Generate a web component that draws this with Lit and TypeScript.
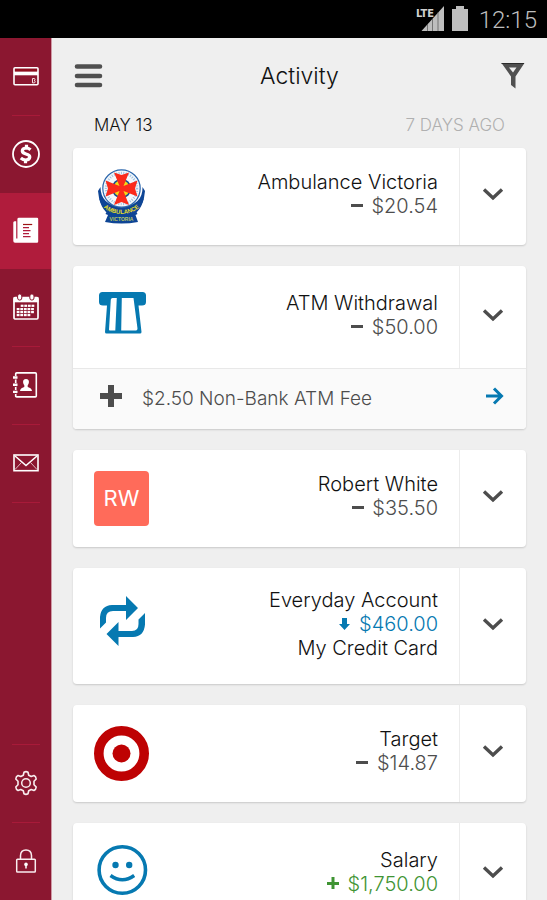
import { LitElement, html, svg, css, nothing, TemplateResult } from "lit";
import { customElement, property } from "lit/decorators.js";

type Tone = "out" | "move" | "in";

interface Transaction {
  logo: TemplateResult;
  title: string;
  amount: string;
  tone: Tone;
  target?: string;
  fee?: string;
  size: "regular" | "roomy" | "tall";
}

/* ---------- navigation icons, 28 x 28 ---------- */

const cardIcon = svg`
  <rect x="2" y="5.700" width="24" height="17" rx="1" fill="none" stroke="#fff" stroke-width="1.600"/>
  <path d="M2 9.500H26V13.300H2Z" fill="#fff"/>
  <path d="M3 7H25V9.300H3Z" fill="#8f0d1c"/>
  <path d="M20.500 16.500h1.500q1 0 1 1t-1 1q1.200 0 1.200 1.200t-1.200 1.200h-1.500Z" fill="none" stroke="#f3dde1" stroke-width="1"/>`;

const dollarIcon = svg`
  <circle cx="14" cy="14" r="13" fill="none" stroke="#fff" stroke-width="1.800"/>
  <path d="M18.500 9.800Q16.500 8 14 8Q10.300 8.200 10.300 11Q10.500 13 14 14Q17.800 15 17.800 17Q17.500 19.800 14 20Q11 20 8.800 18" fill="none" stroke="#fff" stroke-width="3.200"/>
  <path d="M14.500 4.800V9M13.500 19V23.300" stroke="#fff" stroke-width="3.200"/>`;

const newsIcon = svg`
  <path d="M7 1.700H25Q26.200 1.700 26.200 3V25.500Q26.200 26.700 25 26.700H3Q1.300 26.500 1.300 25V6.500Q1.300 5.500 2.500 5.300H4.200V22.500H5.400V3Q5.500 1.700 7 1.700Z" fill="#fff"/>
  <path d="M11 12H17M11 15H18.500M11 18H17M11 21H18.500" transform="translate(0 -0.300)" stroke="#b01c3c" stroke-width="1.300"/>
  <path d="M11 8.500H20.200" stroke="#9c1515" stroke-width="1.200"/>`;

const dotRows = [
  [8.7, 12.7, 4], [4.7, 16, 5], [4.7, 19, 5], [4.7, 22, 4],
];
const calendarIcon = svg`
  <path d="M3 4.500H25Q26 4.500 26 6V24.500Q26 26 25 26H3Q2 26 2 24.500V6Q2 4.500 3 4.500Z" fill="none" stroke="#fff" stroke-width="1.700"/>
  <path d="M1.500 4.500H26.500V9.300H1.500Z" fill="#fff"/>
  <rect x="5.600" y="0.900" width="4.200" height="6.200" rx="2.100" fill="#fff" stroke="#8b1730" stroke-width="1"/>
  <rect x="17.800" y="0.900" width="4.200" height="6.200" rx="2.100" fill="#fff" stroke="#8b1730" stroke-width="1"/>
  ${dotRows.map(([x, y, n]) => Array.from({ length: n }, (_, i) =>
    svg`<rect x=${x + i * 3.6} y=${y - 1} width="2.800" height="2.200" fill="#fff"/>`))}`;

const contactsIcon = svg`
  <rect x="3.700" y="1.900" width="20.600" height="24" rx="1" fill="none" stroke="#fff" stroke-width="1.600"/>
  <path d="M3.700 3V25" stroke="#8b1730" stroke-width="2"/>
  <path d="M3.700 8.500V12M3.700 16V19M3.700 23V26M3.700 2V5" stroke="#fff" stroke-width="1.500"/>
  <path d="M1 6.500H5.500M1 13.700H5.500M1 20.900H5.500" stroke="#fff" stroke-width="2.400"/>
  <path d="M14 8Q17.300 8 16.900 11.500Q16.700 13.300 15.700 14.300V16Q19.800 17 20 20H8Q8.200 17 12.300 16V14.300Q11.300 13.300 11.100 11.500Q10.700 8 14 8Z" fill="#fff"/>`;

const mailIcon = svg`
  <rect x="2" y="6" width="24" height="15.700" fill="none" stroke="#fff" stroke-width="1.600"/>
  <path d="M3 7L14 16.500L25 7" fill="none" stroke="#fff" stroke-width="1.600"/>
  <path d="M3 20.500L9.500 13.500M25 20.500L18.500 13.500" stroke="#e8c9cf" stroke-width="0.900"/>`;

const gearIcon = svg`
  <path d="M12 3.200Q14 2 16 3.200L16.700 6.200L19.200 7.500L22 6.500Q24 7.300 24.200 10L22 12.300V15.700L24.200 18Q24 20.700 22 21.500L19.200 20.500L16.700 21.800L16 24.800Q14 26 12 24.800L11.300 21.800L8.800 20.500L6 21.500Q4 20.700 3.800 18L6 15.700V12.300L3.800 10Q4 7.300 6 6.500L8.800 7.500L11.300 6.200Z" fill="none" stroke="#f9edef" stroke-width="1.600" stroke-linejoin="round"/>
  <circle cx="14" cy="14" r="4.300" fill="none" stroke="#f9edef" stroke-width="1.500"/>`;

const lockIcon = svg`
  <rect x="4.700" y="12.200" width="18.600" height="12.800" rx="0.800" fill="none" stroke="#f9edef" stroke-width="1.500"/>
  <path d="M8.500 12V8.500Q8.700 3 14 3Q19.300 3 19.500 8.500V12" fill="none" stroke="#f9edef" stroke-width="1.500"/>
  <circle cx="14" cy="17.400" r="1.800" fill="#fff"/><path d="M14 17V21.500" stroke="#fff" stroke-width="1.500"/>`;

/* ---------- merchant logos, 55 x 55 ---------- */

const ambulanceLogo = html`<svg viewBox="0 0 55 55" role="img" aria-label="Ambulance Victoria logo">
  <path d="M6.500 18L4 22Q5 36 13 42L11.500 45L14 46L11 53Q27.500 56 44 53L41.500 46L43.500 45L42 42Q50 36 51 22L48.500 18Q49 36 27.500 38Q6.500 36 6.500 18Z" fill="#0e4595"/>
  <circle cx="27.500" cy="19.500" r="18.700" fill="#f4f8fc" stroke="#2b66ac" stroke-width="1.200"/>
  <circle cx="27.500" cy="19.500" r="15.500" fill="none" stroke="#9fc0df" stroke-width="2.500" stroke-dasharray="1 1.400"/>
  <circle cx="27.500" cy="19.500" r="9" fill="#f5d915" stroke="#1d4f92" stroke-width="1.600"/>
  <path d="M20 3.500L27.500 6L35 3.500L29.500 17L43.500 11.500L41 19.500L43.500 27.500L29.500 22L35 36L27.500 33L20 36L25.500 22L11.500 27.500L14 19.500L11.500 11.500L25.500 17Z" fill="#fb2a1c"/>
  <path d="M9 33Q14 40 27.500 40Q41 40 46 33L50 29Q48 38 43 43Q27.500 51 12 43Q7 38 5 29Z" fill="#0e4595"/>
  <path id="banner" d="M8 37Q16 45 27.500 45Q39 45 47 37" fill="none"/>
  <text font-family="Liberation Sans, sans-serif" font-weight="bold" font-size="6" fill="#e9df26"><textPath href="#banner" startOffset="50%" text-anchor="middle">AMBULANCE</textPath></text>
  <text x="27.500" y="52" text-anchor="middle" font-family="Liberation Sans, sans-serif" font-weight="bold" font-size="5" fill="#b9c664">VICTORIA</text>
</svg>`;

const atmLogo = html`<svg viewBox="94 289 55 55" aria-hidden="true">
  <path d="M102.500 291H142.500Q146 291 146 294.500V301Q146 304.500 142 304.500H138.500L141.500 331Q141.500 332.500 140 332.500H106.500Q105 332.500 105 331L107 304.500H103Q99 304.500 99 301V294.500Q99 291 102.500 291Z" fill="#0679b1"/>
  <path d="M112.500 297H116.800L115.300 329.500H109.800Q109 329.500 109 328.500L110.800 298.500Q111 297 112.500 297ZM121.800 297H133.500L137.500 327.500Q137.500 329.500 136 329.500H121.200Z" fill="#fff"/>
</svg>`;

const swapLogo = html`<svg viewBox="94 599 55 55" aria-hidden="true">
  <g fill="#0679b1">
    <path d="M100 628.500V617Q101 605.500 112 605H126V596L138 608L126 620V611H113Q106 611 106 618V622.500Z"/>
    <path d="M145 613V624.500Q144 636.500 133 637H118.500V646L106.500 634L118.500 622V631H132Q138.500 631 138.500 624V619.500Z"/>
  </g>
</svg>`;

const bullseyeLogo = html`<svg viewBox="0 0 55 55" role="img" aria-label="Target logo">
  <circle cx="27.500" cy="27.500" r="22.700" fill="#fff" stroke="#be0203" stroke-width="9.600"/>
  <circle cx="27.500" cy="27.500" r="9" fill="#be0203"/>
</svg>`;

const smileLogo = html`<svg viewBox="94 847 55 55" aria-hidden="true">
  <circle cx="122.300" cy="870" r="23.200" fill="none" stroke="#0679b1" stroke-width="3.600"/>
  <circle cx="115.500" cy="865" r="3.200" fill="#0679b1"/>
  <circle cx="129.200" cy="865" r="3.200" fill="#0679b1"/>
  <path d="M110.500 875.500Q122.300 884 134.200 875.500" fill="none" stroke="#0679b1" stroke-width="3.500"/>
</svg>`;

const initialsLogo = html`<span class="initials">RW</span>`;

const transactions: Transaction[] = [
  { logo: ambulanceLogo, title: "Ambulance Victoria", amount: "$20.54", tone: "out", size: "regular" },
  { logo: atmLogo, title: "ATM Withdrawal", amount: "$50.00", tone: "out", size: "roomy", fee: "$2.50 Non-Bank ATM Fee" },
  { logo: initialsLogo, title: "Robert White", amount: "$35.50", tone: "out", size: "regular" },
  { logo: swapLogo, title: "Everyday Account", amount: "$460.00", tone: "move", size: "tall", target: "My Credit Card" },
  { logo: bullseyeLogo, title: "Target", amount: "$14.87", tone: "out", size: "regular" },
  { logo: smileLogo, title: "Salary", amount: "$1,750.00", tone: "in", size: "roomy" },
];

const signs: Record<Tone, TemplateResult> = {
  out: html`<svg class="sign" viewBox="0 0 14 14" aria-label="minus"><path d="M1 5H13V8H1Z" fill="#4d4d4d"/></svg>`,
  move: html`<svg class="sign" viewBox="0 0 14 14" aria-label="transfer to"><path d="M5 1H10V7H13L7.500 13L2 7H5Z" fill="#0679b1"/></svg>`,
  in: html`<svg class="sign" viewBox="0 0 14 14" aria-label="plus"><path d="M5.500 0H8.500V5H13V8H8.500V12H5.500V8H1V5H5.500Z" fill="#3f9433"/></svg>`,
};

@customElement("status-bar")
export class StatusBar extends LitElement {
  static styles = css`
    :host {
      display: flex;
      justify-content: flex-end;
      align-items: center;
      gap: 8px;
      height: 38px;
      padding-right: 10px;
      background: #000;
      color: #bebebe;
      font: 300 24px/38px Roboto, sans-serif;
    }
    .signal { width: 28px; height: 26px; }
    .battery { width: 16px; height: 26px; }
    .clock { padding: 2px 0 0 3px; }
  `;
  render() {
    return html`
      <svg class="signal" viewBox="0 0 28 26" role="img" aria-label="LTE signal">
        <path d="M5.500 25L28 0V25Z" fill="#bebebe"/>
        <path d="M11.500 18V25M16.500 13V25M22 6V25" stroke="#555" stroke-width="0.700"/>
        <path d="M0 0H18V8L14 12H0Z" fill="#000"/>
        <text x="0" y="11" font-family="DejaVu Sans Condensed, Roboto, sans-serif" font-weight="bold" font-size="11" fill="#d0d0d0">LTE</text>
      </svg>
      <svg class="battery" viewBox="0 0 16 26" role="img" aria-label="Battery">
        <path d="M4 0H12V3H16V25H0V3H4Z" fill="#bebebe"/>
      </svg>
      <span class="clock">12:15</span>
    `;
  }
}

@customElement("nav-rail")
export class NavRail extends LitElement {
  static styles = css`
    :host {
      display: flex;
      flex-direction: column;
      justify-content: space-between;
      width: 51px;
      border-right: 1px solid #cf9aa6;
      background: #8b1730;
      overflow: hidden;
    }
    ul { margin: 0; padding: 0; list-style: none; }
    .divided::after, .led::before {
      content: "";
      display: block;
      height: 1px;
      margin: 0 11px 0 12px;
      background: #a81a39;
    }
    button {
      display: grid;
      place-items: center;
      width: 100%;
      height: 77px;
      margin: 0;
      padding: 0 0 2px 1px;
      border: 0;
      background: none;
      cursor: pointer;
    }
    .active { height: 76px; background: #b01c3c; }
    svg { width: 28px; height: 28px; }
  `;
  private item(label: string, icon: unknown, rule = "", active = false) {
    return html`<li class=${rule}>
      <button class=${active ? "active" : ""} aria-label=${label}>
        <svg viewBox="0 0 28 28" aria-hidden="true">${icon}</svg>
      </button>
    </li>`;
  }
  render() {
    return html`
      <ul>
        ${this.item("Cards", cardIcon, "divided")}
        ${this.item("Payments", dollarIcon)}
        ${this.item("Activity", newsIcon, "", true)}
        ${this.item("Calendar", calendarIcon, "divided")}
        ${this.item("Contacts", contactsIcon, "divided")}
        ${this.item("Messages", mailIcon, "divided")}
      </ul>
      <ul>
        ${this.item("Settings", gearIcon, "led")}
        ${this.item("Lock", lockIcon, "led")}
      </ul>
    `;
  }
}

@customElement("transaction-card")
export class TransactionCard extends LitElement {
  @property({ attribute: false }) entry!: Transaction;

  static styles = css`
    :host {
      display: block;
      border-radius: 4px;
      background: #fff;
      box-shadow: 0 1px 2px rgba(0, 0, 0, 0.16);
      overflow: hidden;
    }
    .main {
      display: grid;
      grid-template-columns: 55px 1fr 67px;
      align-items: center;
      padding-left: 21px;
    }
    .regular { min-height: 97px; }
    .roomy { min-height: 102px; }
    .tall { min-height: 116px; }
    .logo { height: 55px; }
    .logo svg { display: block; width: 55px; height: 55px; overflow: visible; }
    .initials {
      display: block;
      border-radius: 4px;
      background: #ff6b5a;
      color: #fff;
      font-size: 22px;
      font-weight: 400;
      line-height: 55px;
      text-align: center;
    }
    .details {
      padding: 0 21px 5px 0;
      color: #111;
      text-align: right;
    }
    .details p { margin: 0; }
    .sign { width: 14px; height: 14px; margin-right: 2px; }
    .out { color: #4d4d4d; }
    .move { color: #0679b1; }
    .in { color: #3f9433; }
    .toggle {
      display: grid;
      place-items: center;
      align-self: stretch;
      margin: 0;
      padding: 0 0 5px;
      border: 0;
      border-left: 1px solid #ececec;
      background: none;
      cursor: pointer;
    }
    .toggle svg { width: 22px; height: 14px; }
    .fee {
      display: grid;
      grid-template-columns: 22px 1fr 20px;
      align-items: center;
      column-gap: 20px;
      height: 60px;
      padding: 0 21px 0 27px;
      border-top: 1px solid #e8e8e8;
      background: #fafafa;
      color: #4d4d4d;
      font-size: 19px;
      text-decoration: none;
    }
    .fee svg { display: block; width: 100%; height: 22px; margin-bottom: 6px; }
  `;

  render() {
    const e = this.entry;
    return html`
      <div class="main ${e.size}">
        <div class="logo">${e.logo}</div>
        <div class="details">
          <p>${e.title}</p>
          <p class=${e.tone}>${signs[e.tone]} ${e.amount}</p>
          ${e.target ? html`<p>${e.target}</p>` : nothing}
        </div>
        <button class="toggle" aria-label="Show details of ${e.title}">
          <svg viewBox="0 0 22 14" aria-hidden="true"><path d="M2 2.500L11 11L20 2.500" fill="none" stroke="#4d4d4d" stroke-width="3.400"/></svg>
        </button>
      </div>
      ${e.fee ? html`
        <a class="fee" href="#fee">
          <svg viewBox="0 0 22 22" aria-hidden="true"><path d="M8 0H14V8H22V14H14V22H8V14H0V8H8Z" fill="#4d4d4d"/></svg>
          <span>${e.fee}</span>
          <svg viewBox="0 0 20 22" aria-hidden="true"><path d="M1 11H16M9 3.500L16.500 11L9 18.500" fill="none" stroke="#0679b1" stroke-width="3"/></svg>
        </a>` : nothing}
    `;
  }
}

@customElement("app-root")
export class AppRoot extends LitElement {
  static styles = css`
    :host {
      display: grid;
      grid-template: auto minmax(0, 1fr) / auto minmax(0, 1fr);
      height: 100vh;
      background: #efefef;
      color: #111;
      font: 300 20px/24px Inter, sans-serif;
    }
    status-bar { grid-column: 1 / -1; }
    main {
      padding: 0 21px;
      overflow-y: auto;
      scrollbar-width: none;
    }
    header {
      display: grid;
      grid-template-columns: 30px 1fr 30px;
      align-items: center;
      height: 75px;
    }
    h1 { margin: 0; font-size: 23px; font-weight: 300; text-align: center; }
    .tool {
      display: flex;
      margin: 0;
      padding: 0;
      border: 0;
      background: none;
      cursor: pointer;
    }
    .filter { justify-content: flex-end; }
    .tool svg { width: 30px; height: 28px; }
    .day {
      display: flex;
      justify-content: space-between;
      height: 35px;
      padding: 0 21px;
      font-size: 17px;
      line-height: 24px;
    }
    .day h2 { margin: 0; font: inherit; }
    .ago { color: #b0b0b0; }
    .list { display: grid; gap: 21px; padding-bottom: 21px; }
  `;

  render() {
    return html`
      <status-bar></status-bar>
      <nav-rail></nav-rail>
      <main>
        <header>
          <button class="tool" aria-label="Menu">
            <svg viewBox="0 0 30 28" aria-hidden="true"><path d="M4 4.500H27M4 14H27M4 23H27" stroke="#505050" stroke-width="4.600" stroke-linecap="round"/></svg>
          </button>
          <h1>Activity</h1>
          <button class="tool filter" aria-label="Filter">
            <svg viewBox="0 0 30 28" aria-hidden="true"><path d="M5.500 1H28.500L19.500 14.500V26.500L15 23V14.500ZM13 5.500L17 10.500L20.500 5.500Z" fill="#505050" fill-rule="evenodd"/><path d="M5.500 1.500H28" stroke="#2b2b2b"/></svg>
          </button>
        </header>
        <div class="day"><h2>MAY 13</h2><span class="ago">7 DAYS AGO</span></div>
        <div class="list">
          ${transactions.map((t) => html`<transaction-card .entry=${t}></transaction-card>`)}
        </div>
      </main>
    `;
  }
}
